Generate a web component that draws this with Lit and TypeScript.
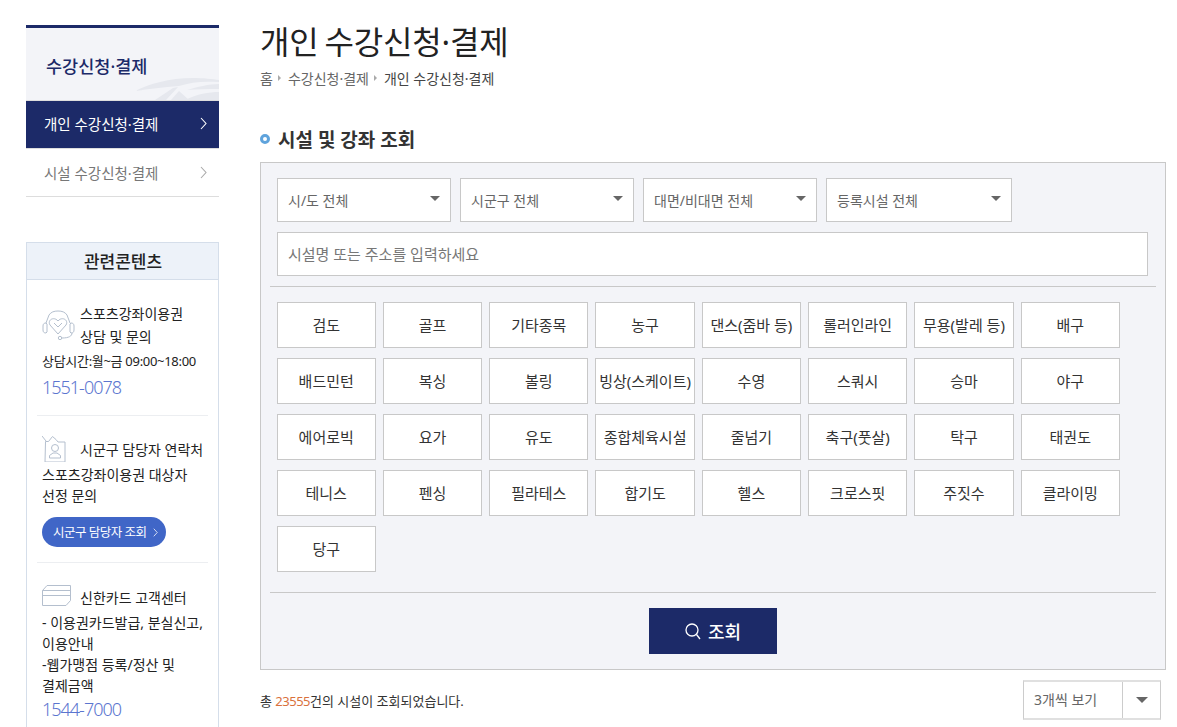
import { LitElement, css, html, svg } from "lit";
import { customElement } from "lit/decorators.js";

const SPORTS = [
  ["검도", "골프", "기타종목", "농구", "댄스(줌바 등)", "롤러인라인", "무용(발레 등)", "배구"],
  ["배드민턴", "복싱", "볼링", "빙상(스케이트)", "수영", "스쿼시", "승마", "야구"],
  ["에어로빅", "요가", "유도", "종합체육시설", "줄넘기", "축구(풋살)", "탁구", "태권도"],
  ["테니스", "펜싱", "필라테스", "합기도", "헬스", "크로스핏", "주짓수", "클라이밍"],
  ["당구"],
];

const chevron = svg`<path d="M1 1l5 5.500L1 12" fill="none" stroke="currentColor" stroke-width="1.100" />`;

@customElement("app-root")
export class AppRoot extends LitElement {
  static styles = css`
    :host {
      display: block;
      height: 727px;
      overflow: hidden;
      background: #fff;
      color: #222;
      font-family: "Noto Sans", "Noto Sans CJK KR", sans-serif;
    }

    .page {
      display: flex;
      gap: 41px;
      padding: 25px 0 0 26px;
    }

    /* sidebar */
    .side {
      width: 193px;
      flex: none;
    }

    .side-title {
      position: relative;
      height: 72px;
      padding: 0 0 0 20px;
      border-top: 3px solid #1c2a68;
      border-bottom: 1px solid #ddd;
      background: #f3f4f8;
      color: #1c2a68;
      font-size: 17.5px;
      font-weight: 500;
      line-height: 76px;
      overflow: hidden;
    }

    .side-title svg {
      position: absolute;
      right: 0;
      bottom: 0;
    }

    .side-title span {
      position: relative;
    }

    .nav {
      display: flex;
      align-items: center;
      justify-content: space-between;
      box-sizing: border-box;
      height: 48px;
      padding: 0 12px 0 18px;
      border-bottom: 1px solid #ddd;
      color: #777;
      font-size: 14.5px;
    }

    .nav.on {
      padding-bottom: 2px;
      background: #1c2a68;
      color: #fff;
    }

    .nav svg {
      width: 7px;
      height: 13px;
      color: #aaa;
    }

    .nav.on svg {
      color: #fff;
    }

    .related {
      margin-top: 45px;
      border: 1px solid #d5deea;
      border-bottom: 0;
      height: 600px;
    }

    .related h3 {
      margin: 0;
      height: 36px;
      border-bottom: 1px solid #d5deea;
      background: #edf2f9;
      color: #222;
      font-size: 17px;
      font-weight: 500;
      line-height: 37px;
      text-align: center;
      text-indent: 1px;
    }

    .block {
      margin: 0 10px;
      padding: 22px 0 17px 5px;
      border-bottom: 1px solid #eceef1;
      font-size: 14px;
      line-height: 21px;
      color: #222;
    }

    .block.two {
      padding: 19px 0 15px 5px;
    }

    .block.three {
      padding: 21px 0 0 5px;
      border-bottom: 0;
    }

    .block-head {
      display: flex;
      align-items: center;
      line-height: 23px;
    }

    .block-head svg {
      flex: none;
      width: 38px;
    }

    .block-head.tall {
      height: 26px;
      padding-bottom: 3px;
    }

    .block-head .push {
      padding-top: 2px;
    }

    .three .block-head svg {
      margin-bottom: 2px;
    }

    .hours {
      margin-top: 3px;
      font-size: 13px;
      letter-spacing: -0.3px;
    }

    .phone {
      margin-top: 5px;
      color: #5b75cf;
      font-size: 18px;
      font-weight: 300;
      letter-spacing: -1px;
    }

    .three .phone {
      margin-top: 3px;
    }

    .pill {
      display: inline-flex;
      align-items: center;
      gap: 6px;
      height: 30px;
      margin: 11px 0 0;
      padding: 0 8px 0 11px;
      border-radius: 15px;
      background: #4066c7;
      color: #fff;
      font-size: 12.5px;
      letter-spacing: -0.5px;
      vertical-align: top;
    }

    .pill svg {
      width: 5px;
      height: 9px;
    }

    .three .lines {
      margin-top: 3px;
    }

    /* main */
    .main {
      width: 906px;
      flex: none;
    }

    h1 {
      margin: -6px 0 0;
      height: 46px;
      color: #222;
      font-size: 32px;
      font-weight: 400;
      line-height: 46px;
      letter-spacing: -0.2px;
      word-spacing: -2px;
    }

    .crumbs {
      display: flex;
      align-items: center;
      height: 22px;
      margin-top: 2px;
      color: #666;
      font-size: 14px;
    }

    .crumbs b {
      width: 0;
      height: 0;
      margin: 0 7px 0 5px;
      border-left: 3px solid #aaa;
      border-top: 3px solid transparent;
      border-bottom: 3px solid transparent;
    }

    .crumbs .cur {
      color: #444;
    }

    h2 {
      display: flex;
      align-items: center;
      gap: 8px;
      height: 30px;
      margin: 35px 0 8px;
      color: #333;
      font-size: 19px;
      font-weight: 700;
    }

    h2 i {
      box-sizing: border-box;
      width: 10px;
      height: 10px;
      border: 3px solid #5fa3dc;
      border-radius: 50%;
    }

    .panel {
      box-sizing: border-box;
      height: 508px;
      padding: 15px 9px 0;
      border: 1px solid #c8c8c8;
      background: #f3f4f8;
    }

    .selects {
      display: flex;
      gap: 9px;
      padding: 0 7px;
    }

    .sel {
      position: relative;
      box-sizing: border-box;
      width: 174px;
      height: 44px;
      padding: 0 10px;
      border: 1px solid #c8c8c8;
      background: #fff;
      color: #666;
      font-size: 14px;
      line-height: 44px;
    }

    .sel.wide {
      width: 186px;
    }

    .sel::after {
      content: "";
      position: absolute;
      top: 17px;
      right: 10px;
      border-top: 5px solid #666;
      border-left: 5.500px solid transparent;
      border-right: 5.500px solid transparent;
    }

    .search {
      box-sizing: border-box;
      height: 44px;
      margin: 10px 8px 10px 7px;
      padding: 0 10px;
      border: 1px solid #c8c8c8;
      background: #fff;
      color: #777;
      font-size: 15px;
      line-height: 42px;
    }

    .rule {
      height: 1px;
      background: #c8c8c8;
    }

    .sports {
      display: flex;
      flex-direction: column;
      gap: 10px;
      height: 270px;
      padding: 15px 0 0 6.550px;
      margin-bottom: 20px;
    }

    .row {
      display: flex;
      gap: 7px;
    }

    .sport {
      box-sizing: border-box;
      width: 99.300px;
      height: 46px;
      border: 1px solid #c8c8c8;
      background: #fff;
      color: #333;
      font-size: 15px;
      line-height: 44px;
      text-align: center;
      white-space: nowrap;
    }

    .go {
      display: flex;
      align-items: center;
      justify-content: center;
      gap: 7px;
      width: 128px;
      height: 46px;
      margin: 15px auto 0;
      background: #1c2a68;
      color: #fff;
      font-size: 18px;
      font-weight: 500;
    }

    .result {
      display: flex;
      align-items: center;
      justify-content: space-between;
      height: 40px;
      margin-top: 10px;
      padding-right: 5px;
      font-size: 13px;
      color: #333;
    }

    .result em {
      color: #d9713c;
      font-style: normal;
      letter-spacing: -0.5px;
    }

    .view {
      display: flex;
      box-sizing: border-box;
      width: 138px;
      height: 40px;
      border: 1px solid #ccc;
      border-top: 2px solid #e0e0e0;
      border-bottom: 2px solid #e0e0e0;
      color: #666;
      font-size: 14px;
      line-height: 36px;
    }

    .view span {
      flex: 1;
      padding-left: 10px;
      border-right: 1px solid #ccc;
    }

    .view b {
      display: flex;
      align-items: center;
      justify-content: center;
      width: 37px;
    }

    .view b::after {
      content: "";
      border-top: 6px solid #666;
      border-left: 6px solid transparent;
      border-right: 6px solid transparent;
    }
  `;

  render() {
    return html`
      <div class="page">
        <aside class="side">
          <div class="side-title">
            <svg width="84" height="24" viewBox="0 0 84 24" fill="#e6e8ee">
              <path d="M0 15C14 8 34 2 58 2c10 0 20 1 26 2v2C68 5 56 6 44 10 28 11 14 13 0 15z" />
              <path d="M20 24l18-12 5-1-12 13zM36 24l8-9 10 9zM52 14c10-3 22-6 32-6v5c-12 0-22 0-32 1zM50 24c12-6 24-8 34-8v8z" />
            </svg>
            <span>수강신청·결제</span>
          </div>
          <div class="nav on">개인 수강신청·결제 <svg viewBox="0 0 7 13">${chevron}</svg></div>
          <div class="nav">시설 수강신청·결제 <svg viewBox="0 0 7 13">${chevron}</svg></div>

          <section class="related">
            <h3>관련콘텐츠</h3>
            <div class="block">
              <div class="block-head">
                <svg height="30" viewBox="0 0 38 30" fill="none" stroke="#b4bfce" stroke-width="1">
                  <path d="M4 13L7 5c2-3 5-4 9-4s7 1 9 4l3 8" />
                  <path d="M1 16c0-2 1-3 3-3l1 1v8l-1 1c-2 0-3-1-3-3zM29 13c2 0 3 1 3 3v4c0 2-1 3-3 3l-1-1v-8zM30 23c0 3-3 5-10 5" />
                  <circle cx="18" cy="28" r="1.700" />
                  <path d="M16 24L8 15c-3-5 4-9 8-4 4-5 11-1 8 4z" />
                  <path d="M12 13l4 4 4-4" />
                </svg>
                <div>스포츠강좌이용권<br />상담 및 문의</div>
              </div>
              <div class="hours">상담시간:월~금 09:00~18:00</div>
              <div class="phone">1551-0078</div>
            </div>
            <div class="block two">
              <div class="block-head tall">
                <svg height="27" viewBox="0 0 38 27" fill="none" stroke="#b4bfce" stroke-width="1">
                  <path d="M3.500 6.500h3l4-5 3.500 3 2 2.500h7v20h-20z" />
                  <path d="M0 1l4 5" />
                  <circle cx="13" cy="13" r="3.500" />
                  <path d="M7.500 23v-2.500l3.500-2.500h4l3.500 2.500v2.500z" />
                </svg>
                <div class="push">시군구 담당자 연락처</div>
              </div>
              <div>스포츠강좌이용권 대상자<br />선정 문의</div>
              <div class="pill">시군구 담당자 조회 <svg viewBox="0 0 7 13">${chevron}</svg></div>
            </div>
            <div class="block three">
              <div class="block-head">
                <svg height="21" viewBox="0 0 38 21" fill="none" stroke="#b4bfce" stroke-width="1">
                  <path d="M.5 5.500L5 .5h23.500v15L24 20.500H.5z" />
                  <path d="M.5 5.500h28M.5 10.500h28" />
                </svg>
                <div class="push">신한카드 고객센터</div>
              </div>
              <div class="lines">- 이용권카드발급, 분실신고,<br />이용안내<br />-웹가맹점 등록/정산 및<br />결제금액</div>
              <div class="phone">1544-7000</div>
            </div>
          </section>
        </aside>

        <main class="main">
          <h1>개인 수강신청·결제</h1>
          <div class="crumbs">
            <span>홈</span><b></b><span>수강신청·결제</span><b></b><span class="cur">개인 수강신청·결제</span>
          </div>
          <h2><i></i>시설 및 강좌 조회</h2>
          <div class="panel">
            <div class="selects">
              <div class="sel">시/도 전체</div>
              <div class="sel">시군구 전체</div>
              <div class="sel">대면/비대면 전체</div>
              <div class="sel wide">등록시설 전체</div>
            </div>
            <div class="search">시설명 또는 주소를 입력하세요</div>
            <div class="rule"></div>
            <div class="sports">
              ${SPORTS.map(
                (row) => html`<div class="row">
                  ${row.map((name) => html`<div class="sport">${name}</div>`)}
                </div>`
              )}
            </div>
            <div class="rule"></div>
            <div class="go">
              <svg width="16" height="17" viewBox="0 0 16 17" fill="none" stroke="#fff" stroke-width="1.300">
                <circle cx="7" cy="7" r="6" />
                <path d="M11.500 11.500L15 16" />
              </svg>
              조회
            </div>
          </div>
          <div class="result">
            <span>총 <em>23555</em>건의 시설이 조회되었습니다.</span>
            <div class="view"><span>3개씩 보기</span><b></b></div>
          </div>
        </main>
      </div>
    `;
  }
}
